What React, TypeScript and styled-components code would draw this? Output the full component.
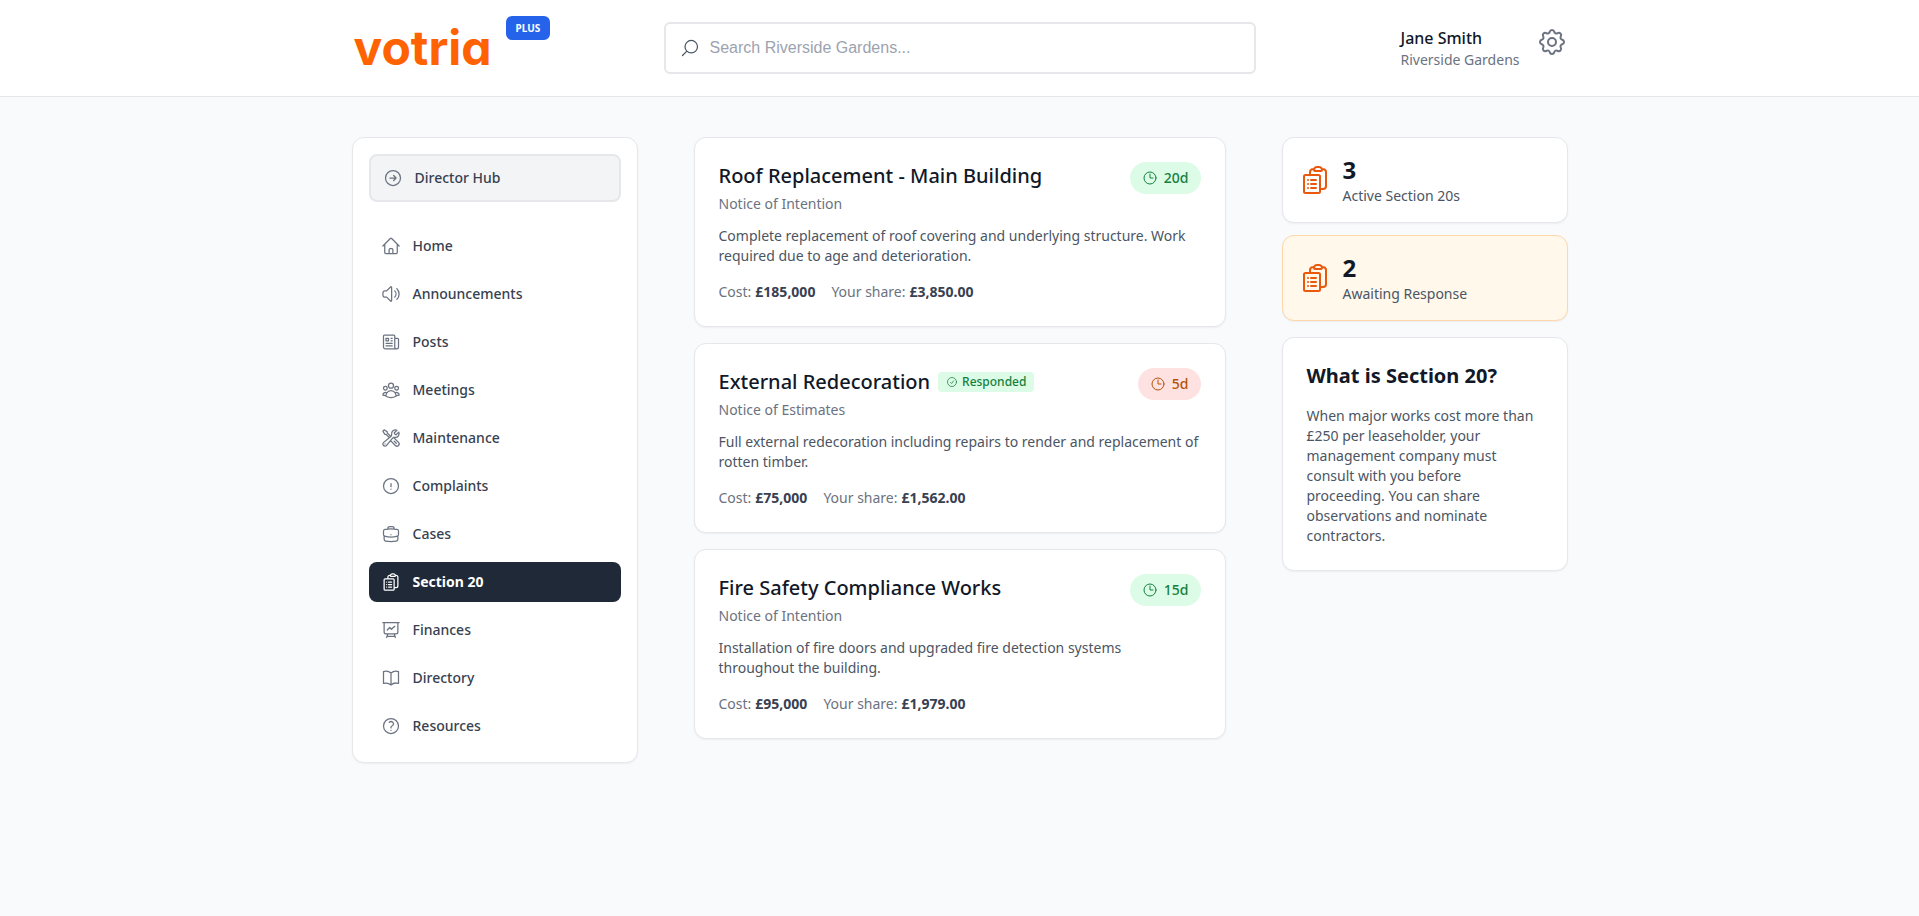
import type { ReactNode } from 'react';
import styled, { createGlobalStyle, css } from 'styled-components';
import type { IconType } from 'react-icons';
import { HiOutlineCog } from 'react-icons/hi';
import {
  HiOutlineArrowRightCircle,
  HiOutlineBookOpen,
  HiOutlineBriefcase,
  HiOutlineCheckCircle,
  HiOutlineClipboardDocumentList,
  HiOutlineClock,
  HiOutlineExclamationCircle,
  HiOutlineHome,
  HiOutlineMagnifyingGlass,
  HiOutlineNewspaper,
  HiOutlinePresentationChartLine,
  HiOutlineQuestionMarkCircle,
  HiOutlineSpeakerWave,
  HiOutlineUserGroup,
  HiOutlineWrenchScrewdriver,
} from 'react-icons/hi2';

const GlobalStyle = createGlobalStyle`
  *, *::before, *::after { box-sizing: border-box; }
  body {
    margin: 0;
    background: #f9fafb;
    color: #111827;
    font-family: 'Noto Sans', sans-serif;
    font-size: 14px;
    line-height: 20px;
  }
  h1, h2, h3, p, ul, dl, dd { margin: 0; padding: 0; }
  a { color: inherit; text-decoration: none; }
  svg { display: block; flex-shrink: 0; }
`;

const Container = styled.div`
  max-width: 1280px;
  margin: 0 auto;
  padding: 0 32px;
`;

const Header = styled.header`
  background: #fff;
  border-bottom: 1px solid #e5e7eb;
`;

const HeaderRow = styled(Container)`
  display: grid;
  grid-template-columns: 1fr minmax(0, 592px) 1fr;
  align-items: center;
  min-height: 96px;
`;

const Brand = styled.a`
  display: flex;
  align-items: flex-start;
  gap: 14px;
  padding-left: 2px;
  align-self: start;
  padding-top: 16px;
`;

const Wordmark = styled.span`
  padding-top: 8px;
  color: #ff6200;
  font-family: 'Inter', sans-serif;
  font-feature-settings: 'cv11';
  font-size: 48px;
  font-weight: 700;
  line-height: 48px;
`;

const PlanBadge = styled.span`
  padding: 2px 10px;
  border-radius: 6px;
  background: #2563eb;
  color: #fff;
  font-size: 10px;
  font-weight: 700;
`;

const SearchBox = styled.label`
  display: flex;
  align-items: center;
  gap: 10px;
  height: 52px;
  padding: 0 14px;
  border: 2px solid #e5e7eb;
  border-radius: 6px;
  background: #fff;
  color: #4b5563;

  svg { transform: scaleX(-1); }
`;

const SearchInput = styled.input`
  flex: 1;
  min-width: 0;
  padding: 0;
  border: 0;
  outline: 0;
  background: transparent;
  color: #111827;
  font: 16px/24px 'Liberation Sans', Arial, sans-serif;

  &::placeholder { color: #9ca3af; opacity: 1; }
`;

const Account = styled.div`
  display: flex;
  align-items: flex-start;
  justify-content: flex-end;
  gap: 16px;
`;

const AccountName = styled.p`
  font-size: 16px;
  font-weight: 500;
  line-height: 24px;
`;

const AccountSite = styled.p`
  color: #6b7280;
`;

const SettingsButton = styled.button`
  padding: 0;
  border: 0;
  background: none;
  color: #6b7280;
  cursor: pointer;
`;

const Page = styled(Container)`
  display: grid;
  grid-template-columns: 286px minmax(0, 1fr) 286px;
  align-items: start;
  gap: 56px;
  padding-top: 40px;
  padding-bottom: 40px;
`;

const Card = styled.section<{ $pad?: number; $tone?: 'plain' | 'alert' }>`
  padding: ${({ $pad = 24 }) => $pad}px;
  border: 1px solid ${({ $tone }) => ($tone === 'alert' ? '#fed7aa' : '#e5e7eb')};
  border-radius: 12px;
  background: ${({ $tone }) => ($tone === 'alert' ? '#fff8eb' : '#fff')};
  box-shadow: 0 1px 2px rgba(0, 0, 0, 0.05);
`;

const HubLink = styled.a`
  display: flex;
  align-items: center;
  gap: 12px;
  height: 48px;
  margin-bottom: 24px;
  padding: 0 12px;
  border: 2px solid #e5e7eb;
  border-radius: 8px;
  background: #f3f4f6;
  color: #374151;
  font-weight: 500;

  svg { color: #6b7280; }
`;

const NavList = styled.ul`
  display: grid;
  gap: 8px;
  list-style: none;
`;

const NavLink = styled.a<{ $active: boolean }>`
  display: flex;
  align-items: center;
  gap: 12px;
  height: 40px;
  padding: 0 12px;
  border-radius: 8px;
  color: #374151;
  font-weight: 500;

  svg { color: #6b7280; }

  ${({ $active }) =>
    $active &&
    css`
      background: #1f2937;
      color: #fff;
      font-weight: 700;

      svg { color: #fff; }
    `}
`;

const Stack = styled.div<{ $gap: number }>`
  display: grid;
  gap: ${({ $gap }) => $gap}px;
`;

const NoticeHead = styled.div`
  display: flex;
  align-items: flex-start;
  justify-content: space-between;
  margin-bottom: 12px;
`;

const TitleRow = styled.div`
  display: flex;
  align-items: center;
  gap: 8px;
  margin-bottom: 4px;
`;

const NoticeTitle = styled.h2`
  font-size: 20px;
  font-weight: 500;
  line-height: 28px;
`;

const Stage = styled.p`
  color: #6b7280;
`;

const Tag = styled.span`
  display: inline-flex;
  align-items: center;
  gap: 4px;
  padding: 2px 8px;
  border-radius: 4px;
  background: #dcfce7;
  color: #15803d;
  font-size: 12px;
  font-weight: 500;
  line-height: 16px;
`;

const DaysPill = styled.span<{ $urgent: boolean }>`
  display: inline-flex;
  align-items: center;
  gap: 6px;
  padding: 6px 12px;
  border-radius: 16px;
  background: ${({ $urgent }) => ($urgent ? '#fee2e2' : '#dcfce7')};
  color: ${({ $urgent }) => ($urgent ? '#b45309' : '#15803d')};
  font-weight: 500;
`;

const BodyText = styled.p`
  color: #4b5563;
`;

const Costs = styled.dl`
  display: flex;
  gap: 16px;
  margin-top: 16px;
  color: #6b7280;
`;

const Cost = styled.div`
  display: flex;
  gap: 4px;

  dd { color: #374151; font-weight: 700; }
`;

const StatCard = styled(Card)`
  display: flex;
  align-items: center;
  gap: 12px;

  svg { color: #ea580c; }
`;

const StatValue = styled.p`
  font-size: 24px;
  font-weight: 700;
  line-height: 32px;
`;

const InfoTitle = styled.h2`
  margin-bottom: 16px;
  font-size: 20px;
  font-weight: 700;
  line-height: 28px;
`;

const navItems: { label: string; Icon: IconType; active?: boolean }[] = [
  { label: 'Home', Icon: HiOutlineHome },
  { label: 'Announcements', Icon: HiOutlineSpeakerWave },
  { label: 'Posts', Icon: HiOutlineNewspaper },
  { label: 'Meetings', Icon: HiOutlineUserGroup },
  { label: 'Maintenance', Icon: HiOutlineWrenchScrewdriver },
  { label: 'Complaints', Icon: HiOutlineExclamationCircle },
  { label: 'Cases', Icon: HiOutlineBriefcase },
  { label: 'Section 20', Icon: HiOutlineClipboardDocumentList, active: true },
  { label: 'Finances', Icon: HiOutlinePresentationChartLine },
  { label: 'Directory', Icon: HiOutlineBookOpen },
  { label: 'Resources', Icon: HiOutlineQuestionMarkCircle },
];

interface Notice {
  title: string;
  stage: string;
  description: string;
  cost: string;
  share: string;
  days: number;
  responded?: boolean;
}

const notices: Notice[] = [
  {
    title: 'Roof Replacement - Main Building',
    stage: 'Notice of Intention',
    description:
      'Complete replacement of roof covering and underlying structure. Work required due to age and deterioration.',
    cost: '£185,000',
    share: '£3,850.00',
    days: 20,
  },
  {
    title: 'External Redecoration',
    stage: 'Notice of Estimates',
    description:
      'Full external redecoration including repairs to render and replacement of rotten timber.',
    cost: '£75,000',
    share: '£1,562.00',
    days: 5,
    responded: true,
  },
  {
    title: 'Fire Safety Compliance Works',
    stage: 'Notice of Intention',
    description:
      'Installation of fire doors and upgraded fire detection systems throughout the building.',
    cost: '£95,000',
    share: '£1,979.00',
    days: 15,
  },
];

function NoticeCard({ notice }: { notice: Notice }) {
  return (
    <Card as="article">
      <NoticeHead>
        <div>
          <TitleRow>
            <NoticeTitle>{notice.title}</NoticeTitle>
            {notice.responded && (
              <Tag>
                <HiOutlineCheckCircle size={12} />
                Responded
              </Tag>
            )}
          </TitleRow>
          <Stage>{notice.stage}</Stage>
        </div>
        <DaysPill $urgent={notice.days <= 7}>
          <HiOutlineClock size={16} />
          {notice.days}d
        </DaysPill>
      </NoticeHead>
      <BodyText>{notice.description}</BodyText>
      <Costs>
        <Cost>
          <dt>Cost:</dt>
          <dd>{notice.cost}</dd>
        </Cost>
        <Cost>
          <dt>Your share:</dt>
          <dd>{notice.share}</dd>
        </Cost>
      </Costs>
    </Card>
  );
}

function Stat({ value, children, tone }: { value: number; children: ReactNode; tone?: 'alert' }) {
  return (
    <StatCard $pad={16} $tone={tone}>
      <HiOutlineClipboardDocumentList size={32} />
      <div>
        <StatValue>{value}</StatValue>
        <BodyText>{children}</BodyText>
      </div>
    </StatCard>
  );
}

export default function App() {
  return (
    <>
      <GlobalStyle />
      <Header>
        <HeaderRow>
          <Brand href="#">
            <Wordmark>votria</Wordmark>
            <PlanBadge>PLUS</PlanBadge>
          </Brand>
          <SearchBox>
            <HiOutlineMagnifyingGlass size={20} />
            <SearchInput
              type="text"
              aria-label="Search Riverside Gardens"
              placeholder="Search Riverside Gardens..."
            />
          </SearchBox>
          <Account>
            <div>
              <AccountName>Jane Smith</AccountName>
              <AccountSite>Riverside Gardens</AccountSite>
            </div>
            <SettingsButton type="button" aria-label="Settings">
              <HiOutlineCog size={32} strokeWidth={1.5} />
            </SettingsButton>
          </Account>
        </HeaderRow>
      </Header>
      <Page>
        <Card as="nav" $pad={16}>
          <HubLink href="#">
            <HiOutlineArrowRightCircle size={20} />
            Director Hub
          </HubLink>
          <NavList>
            {navItems.map(({ label, Icon, active = false }) => (
              <li key={label}>
                <NavLink href="#" $active={active} aria-current={active ? 'page' : undefined}>
                  <Icon size={20} />
                  {label}
                </NavLink>
              </li>
            ))}
          </NavList>
        </Card>
        <Stack as="main" $gap={16}>
          {notices.map((notice) => (
            <NoticeCard key={notice.title} notice={notice} />
          ))}
        </Stack>
        <Stack as="aside" $gap={16}>
          <Stack $gap={12}>
            <Stat value={3}>Active Section 20s</Stat>
            <Stat value={2} tone="alert">
              Awaiting Response
            </Stat>
          </Stack>
          <Card>
            <InfoTitle>What is Section 20?</InfoTitle>
            <BodyText>
              When major works cost more than £250 per leaseholder, your management company must
              consult with you before proceeding. You can share observations and nominate
              contractors.
            </BodyText>
          </Card>
        </Stack>
      </Page>
    </>
  );
}
